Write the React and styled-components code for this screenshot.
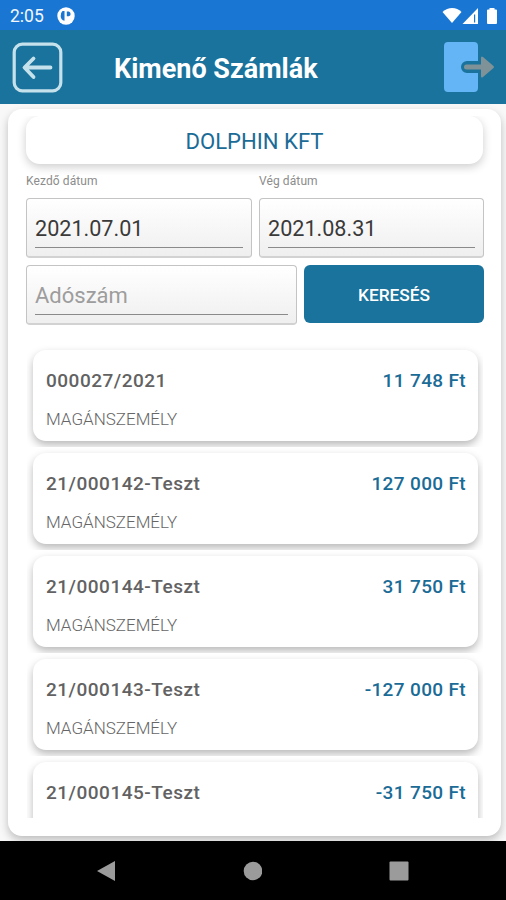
import React, { useState } from "react";
import styled, { createGlobalStyle } from "styled-components";

const colors = {
  status: "#1976d2",
  primary: "#1a739c",
  amount: "#1a6b96",
  text: "#626262",
  navIcon: "#9b9b9b"
};

const invoices = [
  { id: "000027/2021", partner: "MAGÁNSZEMÉLY", amount: "11 748 Ft" },
  { id: "21/000142-Teszt", partner: "MAGÁNSZEMÉLY", amount: "127 000 Ft" },
  { id: "21/000144-Teszt", partner: "MAGÁNSZEMÉLY", amount: "31 750 Ft" },
  { id: "21/000143-Teszt", partner: "MAGÁNSZEMÉLY", amount: "-127 000 Ft" },
  { id: "21/000145-Teszt", amount: "-31 750 Ft" }
];

const GlobalStyle = createGlobalStyle`
  * {
    box-sizing: border-box;
  }
  body {
    margin: 0;
    font-family: Roboto, "Liberation Sans", sans-serif;
  }
`;

const Screen = styled.div`
  display: flex;
  flex-direction: column;
  width: 506px;
  height: 900px;
  overflow: hidden;
  background: #f8f8f8;
`;

const StatusBar = styled.div`
  display: flex;
  align-items: center;
  flex: 0 0 30px;
  padding: 2px 8px 0 10px;
  background: ${colors.status};
  color: #f2f8ff;
`;

const Clock = styled.span`
  width: 47px;
  font-size: 17.5px;
  line-height: 28px;
`;

const StatusIcons = styled.div`
  display: flex;
  margin-left: auto;
`;

const Header = styled.header`
  display: flex;
  align-items: center;
  flex: 0 0 74px;
  padding: 0 10px 0 12px;
  background: ${colors.primary};
`;

const IconButton = styled.button`
  display: flex;
  padding: 0;
  border: 0;
  background: none;
`;

const Title = styled.h1`
  flex: 1;
  margin: 4px 0 0 51px;
  color: #fff;
  font-size: 27px;
  font-weight: 700;
  line-height: 32px;
`;

const Content = styled.main`
  display: flex;
  flex: 1;
  min-height: 0;
  padding: 5px 5px 5px 8px;
  overflow: hidden;
`;

const Panel = styled.section`
  display: flex;
  flex-direction: column;
  flex: 1;
  min-width: 0;
  padding: 7px 0 18px;
  border-radius: 14px;
  background: #fff;
  box-shadow: 0 4px 9px rgba(0, 0, 0, 0.24);
`;

/* cuts the card shadow at its top edge */
const CompanySlot = styled.div`
  flex: 0 0 59px;
  padding: 0 18px 0 18px;
  overflow: hidden;
`;

const Company = styled.div`
  height: 48px;
  border-radius: 14px;
  background: #fff;
  box-shadow: 0 3px 10px rgba(0, 0, 0, 0.2);
  color: ${colors.amount};
  font-size: 22.1px;
  line-height: 51px;
  text-align: center;
`;

const Filters = styled.div`
  display: flex;
  flex-direction: column;
  gap: 7px;
  padding: 0 17px 0 18px;
`;

const FilterRow = styled.div`
  display: grid;
  grid-template-columns: ${props => props.$columns};
  gap: 7px;
`;

const Label = styled.label`
  display: block;
  height: 23px;
  color: #8c8c8c;
  font-size: 12px;
  line-height: 12px;
  letter-spacing: 0.1px;
`;

const Field = styled.div`
  height: 60px;
  padding: 15px 8px 10px;
  border: 1px solid #c4c4c4;
  border-bottom: 2px solid #d2d2d2;
  border-radius: 4px;
  background: linear-gradient(#fff, #efefef);
`;

const Input = styled.input`
  display: block;
  width: 100%;
  height: 34px;
  padding: 0 0 4px;
  border: 0;
  border-bottom: 1px solid #8a8a8a;
  outline: 0;
  background: transparent;
  color: #3a3a3a;
  font-family: inherit;
  font-size: 21.6px;

  &::placeholder {
    color: #9d9d9d;
    font-size: 22px;
    opacity: 1;
  }
`;

const SearchButton = styled.button`
  height: 58px;
  padding-top: 2px;
  border: 0;
  border-radius: 6px;
  background: ${colors.primary};
  color: #fff;
  font-family: inherit;
  font-size: 17.3px;
  font-weight: 500;
`;

const List = styled.div`
  flex: 1;
  min-height: 0;
  margin: 19px 18px 0 19px;
  overflow: hidden;
`;

const ListItem = styled.div`
  height: 103px;
  padding: 6px 5px 6px 6px;
  overflow: hidden;
`;

const Card = styled.article`
  height: 91px;
  padding: 18px 12px 0 13px;
  border-radius: 13px;
  background: #fff;
  box-shadow: 0 4px 9px rgba(0, 0, 0, 0.28);
`;

const CardTop = styled.div`
  display: flex;
  justify-content: space-between;
  font-size: 19px;
  font-weight: 500;
  line-height: 25px;
`;

const InvoiceId = styled.span`
  color: ${colors.text};
  letter-spacing: 0.5px;
`;

const Amount = styled.span`
  color: ${colors.amount};
  letter-spacing: 0.35px;
`;

const Partner = styled.div`
  margin-top: 13px;
  color: #666;
  font-size: 17px;
  font-weight: 300;
  line-height: 26px;
`;

const NavBar = styled.nav`
  display: flex;
  align-items: center;
  flex: 0 0 59px;
  justify-content: space-between;
  padding: 0 97px 0 96px;
  background: #000;
`;

const Invoice = ({ item }) => (
  <ListItem>
    <Card>
      <CardTop>
        <InvoiceId>{item.id}</InvoiceId>
        <Amount>{item.amount}</Amount>
      </CardTop>
      {item.partner ? <Partner>{item.partner}</Partner> : null}
    </Card>
  </ListItem>
);

const App = () => {
  const [from, setFrom] = useState("2021.07.01");
  const [to, setTo] = useState("2021.08.31");
  const [taxNumber, setTaxNumber] = useState("");

  return (
    <Screen>
      <GlobalStyle />
      <StatusBar>
        <Clock>2:05</Clock>
        <svg width="18" height="18" viewBox="0 0 18 18">
          <circle cx="9" cy="9" r="8.7" fill="#fff" />
          <path
            d="M7.500 4V13.800A5 5 0 0 1 3.700 9Q3.700 5.500 5.500 4z"
            fill={colors.status}
          />
          <path
            d="M9.800 4.500h2q1.800.5 1.800 2.500t-1.800 2.300h-2z"
            fill={colors.status}
          />
        </svg>
        <StatusIcons>
          <svg width="56" height="18" viewBox="0 0 56 18" fill="#fff">
            <path d="M.5 5C6-.2 14.500-.2 19.500 5L10 16z" />
            <path d="M36 1v16H20.500z" />
            <path d="M32 7.500h1.200v8h-1.200z" fill={colors.status} />
            <path d="M47.500 1h5v1.500h1.500q1 0 1 1V16q0 1-1 1h-8q-1 0-1-1V3.500q0-1 1-1h1.500z" />
          </svg>
        </StatusIcons>
      </StatusBar>

      <Header>
        <IconButton aria-label="Vissza">
          <svg
            width="51"
            height="51"
            viewBox="0 0 51 51"
            fill="none"
            stroke="#c5e1ec"
            strokeWidth="3.200"
          >
            <rect x="2.200" y="2.200" width="46.600" height="46.600" rx="8" />
            <path
              d="M38.500 25.500H13M21.500 16.500L12.500 25.500L21.500 35"
              strokeWidth="3.800"
              strokeLinecap="round"
              strokeLinejoin="round"
            />
          </svg>
        </IconButton>
        <Title>Kimenő Számlák</Title>
        <IconButton aria-label="Kilépés">
          <svg width="52" height="50" viewBox="0 0 52 50">
            <path
              d="M4 0h26q4 0 4 4v15H23a6 6 0 0 0 0 12h11v15q0 4-4 4H4q-4 0-4-4V4q0-4 4-4z"
              fill="#64b5f6"
            />
            <path
              d="M22.500 22.500H37V16q0-2.500 2-1L49.500 24q1 1 0 2L39 35q-2 1.500-2-1v-6.500H22.500a2.500 2.500 0 0 1 0-5z"
              fill="#7f9297"
            />
          </svg>
        </IconButton>
      </Header>

      <Content>
        <Panel>
          <CompanySlot>
            <Company>DOLPHIN KFT</Company>
          </CompanySlot>
          <Filters>
            <FilterRow $columns="226px 1fr">
              <div>
                <Label htmlFor="from">Kezdő dátum</Label>
                <Field>
                  <Input
                    id="from"
                    value={from}
                    onChange={e => setFrom(e.target.value)}
                  />
                </Field>
              </div>
              <div>
                <Label htmlFor="to">Vég dátum</Label>
                <Field>
                  <Input
                    id="to"
                    value={to}
                    onChange={e => setTo(e.target.value)}
                  />
                </Field>
              </div>
            </FilterRow>
            <FilterRow $columns="271px 1fr">
              <Field>
                <Input
                  placeholder="Adószám"
                  value={taxNumber}
                  onChange={e => setTaxNumber(e.target.value)}
                />
              </Field>
              <SearchButton>KERESÉS</SearchButton>
            </FilterRow>
          </Filters>
          <List>
            {invoices.map(item => (
              <Invoice key={item.id} item={item} />
            ))}
          </List>
        </Panel>
      </Content>

      <NavBar>
        <svg width="19" height="22" viewBox="0 0 19 22" fill={colors.navIcon}>
          <path d="M19 1v20L1 11z" />
        </svg>
        <svg width="20" height="20" viewBox="0 0 20 20" fill={colors.navIcon}>
          <circle cx="11" cy="10" r="9.300" />
        </svg>
        <svg width="20" height="20" viewBox="0 0 20 20" fill={colors.navIcon}>
          <rect x=".5" y=".5" width="19" height="19" rx="1" />
        </svg>
      </NavBar>
    </Screen>
  );
};

export default App;
